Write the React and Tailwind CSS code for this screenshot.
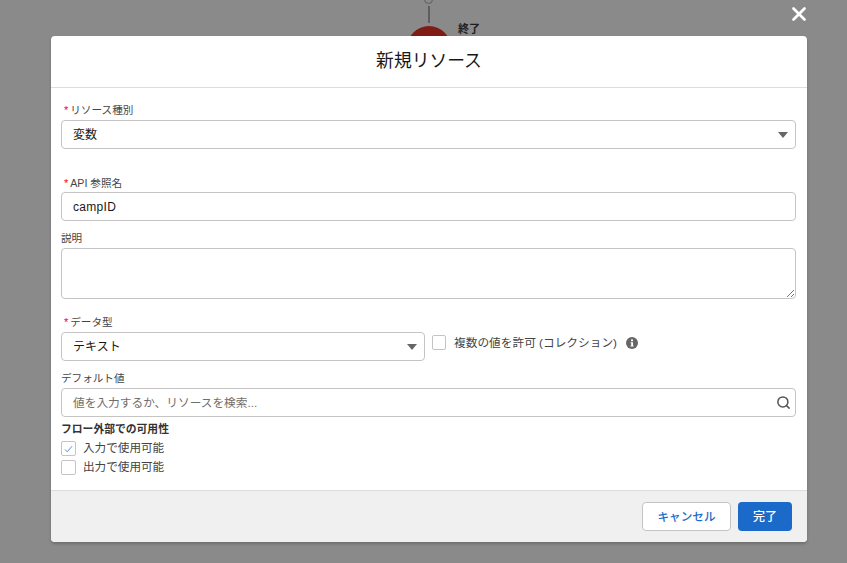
import { Search, X } from 'lucide-react';

function Label({ required, children, className = '' }) {
  return (
    <div className={`flex items-center h-[14px] text-[10.6px] leading-[14px] text-[#444444] ${className}`}>
      {required && <span className="text-[#ea001e] ml-[3px] mr-[2px] text-[11px]">*</span>}
      <span>{children}</span>
    </div>
  );
}

function SelectBox({ value, className = '' }) {
  return (
    <div className={`flex items-center justify-between h-[29px] pl-[11px] pr-[7px] bg-white border border-[#c4c4c4] rounded-[4px] text-[12px] text-[#181818] ${className}`}>
      <span>{value}</span>
      <svg width="10" height="6" viewBox="0 0 10 6"><path d="M0 0h10L5 6z" fill="#666666" /></svg>
    </div>
  );
}

function CheckRow({ checked, children }) {
  return (
    <div className="flex items-center h-[15px] gap-[7px] text-[11.6px] text-[#444444]">
      <span className="flex items-center justify-center w-[15px] h-[15px] bg-white border border-[#c4c4c4] rounded-[2px]">
        {checked && (
          <svg width="9" height="8" viewBox="0 0 9 8" fill="none">
            <path d="M1 4.5 3.3 6.8 8 1.2" stroke="#5b8fd6" strokeWidth="1" />
          </svg>
        )}
      </span>
      <span className="pb-[2px]">{children}</span>
    </div>
  );
}

export default function App() {
  return (
    <div className="relative w-[847px] h-[563px] overflow-hidden bg-[#8a8a8a] font-['Liberation_Sans','Noto_Sans_CJK_JP',sans-serif]">
      {/* flow canvas behind the dialog */}
      <div className="absolute left-[424px] top-[-5px] w-[9px] h-[9px] rounded-full border border-[#5e5e5e] bg-[#8a8a8a]" />
      <div className="absolute left-[428px] top-[6px] w-[2px] h-[17px] bg-[#5e5e5e]" />
      <div className="absolute left-[407px] top-[26px] w-[44px] h-[44px] rounded-full bg-[#7f1d14]" />
      <div className="absolute left-[458px] top-[22px] text-[11px] leading-[15px] font-bold text-[#1f1f1f]">終了</div>
      <X className="absolute left-[788px] top-[3px] w-[22px] h-[22px] text-white" strokeWidth={3} />

      <div className="relative ml-[51px] mr-[40px] translate-y-[36px] h-[506px] flex flex-col bg-white rounded-[4px] overflow-hidden shadow-[0_2px_3px_rgba(0,0,0,0.2)]">
        <div className="flex items-center justify-center h-[52px] border-b border-[#dddddd] text-[17.8px] text-[#181818]">
          新規リソース
        </div>

        <div className="flex-1 pl-[10px] pr-[11px] pt-[15px]">
          <Label required>リソース種別</Label>
          <SelectBox value="変数" className="mt-[3px]" />

          <Label required className="mt-[27px]">API 参照名</Label>
          <div className="flex items-center h-[29px] mt-[2px] pl-[11px] bg-white border border-[#c4c4c4] rounded-[4px] text-[12px] tracking-[0.3px] text-[#181818]">
            campID
          </div>

          <Label className="mt-[10px]">説明</Label>
          <div className="relative h-[51px] mt-[3px] bg-white border border-[#c4c4c4] rounded-[4px]">
            <svg className="absolute right-[1px] bottom-[1px]" width="8" height="8" viewBox="0 0 8 8" stroke="#777777" strokeWidth="1">
              <path d="M1 8 8 1M5 8 8 5" />
            </svg>
          </div>

          <Label required className="mt-[16px]">データ型</Label>
          <div className="flex items-start mt-[3px]">
            <SelectBox value="テキスト" className="w-[364px]" />
            <div className="flex items-center h-[21px] ml-[7px] text-[11.7px] text-[#444444]">
              <span className="w-[14px] h-[15px] bg-white border border-[#c4c4c4] rounded-[2px]" />
              <span className="ml-[8px]">複数の値を許可 (コレクション)</span>
              <svg className="ml-[9px]" width="12" height="12" viewBox="0 0 12 12">
                <circle cx="6" cy="6" r="6" fill="#666666" />
                <rect x="5" y="2.4" width="2" height="1.8" fill="#ffffff" />
                <path d="M4.6 5.2H7v3.2h.6v1H4.6v-1h.6V6.2h-.6z" fill="#ffffff" />
              </svg>
            </div>
          </div>

          <Label className="mt-[10px]">デフォルト値</Label>
          <div className="flex items-center justify-between h-[29px] mt-[3px] pl-[11px] pr-[4px] bg-white border border-[#c4c4c4] rounded-[4px] text-[11.7px] text-[#706e6b]">
            <span>値を入力するか、リソースを検索...</span>
            <Search className="w-[15px] h-[15px] text-[#555555]" strokeWidth={2.4} />
          </div>

          <div className="h-[14px] mt-[5px] text-[10.8px] leading-[14px] font-bold text-[#333333]">フロー外部での可用性</div>
          <div className="flex flex-col gap-[4px] mt-[5px]">
            <CheckRow checked>入力で使用可能</CheckRow>
            <CheckRow>出力で使用可能</CheckRow>
          </div>
        </div>

        <div className="flex items-center justify-end gap-[7px] h-[52px] pr-[15px] bg-[#f0f0f0] border-t border-[#dddddd]">
          <div className="flex items-center justify-center w-[89px] h-[29px] bg-white border border-[#c4c4c4] rounded-[4px] text-[11.6px] font-medium text-[#1b6ac9]">
            キャンセル
          </div>
          <div className="flex items-center justify-center w-[54px] h-[29px] bg-[#1b6ac9] rounded-[4px] text-[12px] font-medium text-white">
            完了
          </div>
        </div>
      </div>
    </div>
  );
}
